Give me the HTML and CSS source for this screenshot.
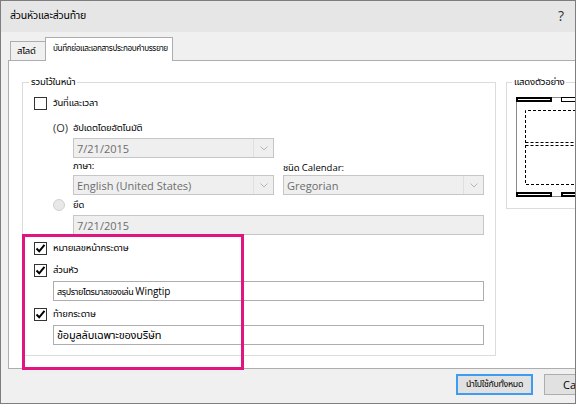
FILE: index.html
```html
<!DOCTYPE html>
<html lang="th">
<head>
<meta charset="utf-8">
<title>ส่วนหัวและส่วนท้าย</title>
<link rel="stylesheet" href="styles.css">
</head>
<body>
<div class="window">
  <div class="titlebar">
    <span class="title th">ส่วนหัวและส่วนท้าย</span>
    <span class="help">?</span>
  </div>
  <div class="tabs">
    <div class="tab th">สไลด์</div>
    <div class="tab active th">บันทึกย่อและเอกสารประกอบคำบรรยาย</div>
  </div>
  <div class="panel">
    <div class="group main">
      <div class="legend th">รวมไว้ในหน้า</div>
      <div class="cbrow first">
        <span class="cb"></span>
        <span class="lbl th">วันที่และเวลา</span>
      </div>
      <div class="radiorow r1">
        <span class="radio-on">(O)</span>
        <span class="lbl th">อัปเดตโดยอัตโนมัติ</span>
      </div>
      <div class="combo date">
        <span class="val">7/21/2015</span>
        <span class="arrow"><svg width="8" height="5" viewBox="0 0 8 5"><polyline points="0.5,0.5 4,4 7.5,0.5" fill="none" stroke="#b4b4b4" stroke-width="1"/></svg></span>
      </div>
      <div class="pair labels">
        <span class="lbl th">ภาษา:</span>
        <span class="lbl cal"><span class="th">ชนิด</span> Calendar:</span>
      </div>
      <div class="pair combos">
        <div class="combo">
          <span class="val">English (United States)</span>
          <span class="arrow"><svg width="8" height="5" viewBox="0 0 8 5"><polyline points="0.5,0.5 4,4 7.5,0.5" fill="none" stroke="#b4b4b4" stroke-width="1"/></svg></span>
        </div>
        <div class="combo">
          <span class="val">Gregorian</span>
          <span class="arrow"><svg width="8" height="5" viewBox="0 0 8 5"><polyline points="0.5,0.5 4,4 7.5,0.5" fill="none" stroke="#b4b4b4" stroke-width="1"/></svg></span>
        </div>
      </div>
      <div class="radiorow r2">
        <span class="radio-off"></span>
        <span class="lbl th">ยึด</span>
      </div>
      <div class="textbox fixed"><span class="val">7/21/2015</span></div>
      <div class="cbrow pg">
        <span class="cb"><svg width="11" height="11" viewBox="0 0 11 11"><polyline points="1.5,5.5 4.2,8.3 9.5,1.8" fill="none" stroke="#000" stroke-width="2"/></svg></span>
        <span class="lbl th">หมายเลขหน้ากระดาษ</span>
      </div>
      <div class="cbrow hd">
        <span class="cb"><svg width="11" height="11" viewBox="0 0 11 11"><polyline points="1.5,5.5 4.2,8.3 9.5,1.8" fill="none" stroke="#000" stroke-width="2"/></svg></span>
        <span class="lbl th">ส่วนหัว</span>
      </div>
      <div class="textbox white hdbox"><span class="txt tight th">สรุปรายไตรมาสของเล่น <span class="lat">Wingtip</span></span></div>
      <div class="cbrow ft">
        <span class="cb"><svg width="11" height="11" viewBox="0 0 11 11"><polyline points="1.5,5.5 4.2,8.3 9.5,1.8" fill="none" stroke="#000" stroke-width="2"/></svg></span>
        <span class="lbl th">ท้ายกระดาษ</span>
      </div>
      <div class="textbox white ftbox"><span class="txt big th">ข้อมูลลับเฉพาะของบริษัท</span></div>
      <div class="highlight"></div>
    </div>
    <div class="group preview">
      <div class="legend th">แสดงตัวอย่าง</div>
      <svg class="page" width="70" height="104" viewBox="0 0 70 104">
        <line x1="0.5" y1="1" x2="0.5" y2="101" stroke="#8a8a8a" stroke-width="1"/>
        <line x1="36" y1="1.5" x2="46" y2="1.5" stroke="#8a8a8a" stroke-width="1"/>
        <line x1="36" y1="100.5" x2="46" y2="100.5" stroke="#8a8a8a" stroke-width="1"/>
        <rect x="1" y="2" width="34" height="3" fill="#fff" stroke="#000" stroke-width="2"/>
        <rect x="45.5" y="1.5" width="40" height="4" fill="#fff" stroke="#000" stroke-width="1"/>
        <rect x="1" y="97" width="34" height="3" fill="#fff" stroke="#000" stroke-width="2"/>
        <rect x="46" y="97" width="40" height="3" fill="#fff" stroke="#000" stroke-width="2"/>
        <path d="M80 14.5 H9.5 V88.5 H80" fill="none" stroke="#000" stroke-width="1" stroke-dasharray="3,2"/>
        <line x1="9.5" y1="46.5" x2="80" y2="46.5" stroke="#000" stroke-width="1" stroke-dasharray="3,2"/>
        <line x1="9.5" y1="49.5" x2="80" y2="49.5" stroke="#000" stroke-width="1" stroke-dasharray="3,2"/>
      </svg>
    </div>
  </div>
  <div class="footer">
    <button class="btn primary th">นำไปใช้กับทั้งหมด</button>
    <button class="btn">Cancel</button>
  </div>
</div>
</body>
</html>
```
FILE: styles.css
```css
* { box-sizing: border-box; }

html, body {
  margin: 0;
  padding: 0;
  background: #ffffff;
}

body {
  font-family: "Open Sans", "Noto Sans", "Liberation Sans", sans-serif;
  font-size: 11px;
  color: #000;
}

.th {
  font-family: "Noto Sans Thai", "Tahoma", "Loma", "Garuda", "Noto Sans", "DejaVu Sans", sans-serif;
  font-size: 9.5px;
  letter-spacing: -0.2px;
}

.lat {
  font-family: "Open Sans", "Noto Sans", sans-serif;
  font-size: 10.5px;
  letter-spacing: 0;
}

.window {
  width: 576px;
  height: 404px;
  border: 1px solid #7e7e7e;
  background: #f0f0f0;
  overflow: hidden;
  display: flex;
  flex-direction: column;
}

.titlebar {
  height: 31px;
  flex: none;
  background: #e6e6e6;
  display: flex;
  align-items: center;
  justify-content: space-between;
  padding: 0 11px 2px 9px;
}

.title { font-size: 10.5px; }

.help {
  font-family: "Open Sans", sans-serif;
  font-size: 14px;
  color: #333;
}

.tabs {
  height: 28px;
  flex: none;
  display: flex;
  align-items: flex-end;
  padding-left: 9px;
  position: relative;
  z-index: 1;
}

.tab {
  height: 19px;
  border: 1px solid #adadad;
  border-bottom: none;
  background: #f0f0f0;
  display: flex;
  align-items: center;
  padding: 0 6px;
  width: 36px;
  white-space: nowrap;
}

.tab.active {
  height: 24px;
  width: auto;
  min-width: 125px;
  margin-left: -1px;
  margin-bottom: -1px;
  background: #fff;
  padding: 0 4px 2px 7px;
  font-size: 8.2px;
  letter-spacing: -0.4px;
}

.panel {
  height: 309px;
  flex: none;
  margin-left: 7px;
  margin-right: -20px;
  background: #fff;
  border: 1px solid #adadad;
  display: flex;
  align-items: flex-start;
  padding-top: 21px;
}

.group {
  border: 1px solid #dcdcdc;
  position: relative;
  flex: none;
}

.legend {
  height: 14px;
  line-height: 14px;
  margin-top: -8px;
  background: #fff;
  width: fit-content;
  padding: 0 2px;
  white-space: nowrap;
}

.group.main {
  margin-left: 13px;
  width: 474px;
  height: 274px;
}

.group.main > .legend { margin-left: 6px; }

.group.preview {
  margin-left: 10px;
  width: 110px;
  height: 127px;
}

.group.preview > .legend { margin-left: 5px; }

.page {
  display: block;
  margin: 7px 0 0 9px;
}

.cbrow {
  display: flex;
  align-items: center;
  height: 14px;
  margin-left: 11px;
  gap: 6px;
}

.cbrow.first { margin-top: 7px; }
.cbrow.pg { margin-top: 6px; }
.cbrow.hd { margin-top: 8px; }
.cbrow.ft { margin-top: 6px; }

.cb {
  width: 13px;
  height: 13px;
  border: 1px solid #333;
  background: #fff;
  display: flex;
  align-items: center;
  justify-content: center;
  flex: none;
}

.lbl { white-space: nowrap; }

.radiorow {
  display: flex;
  align-items: center;
  height: 14px;
  margin-left: 30px;
}

.radiorow.r1 { margin-top: 11px; }
.radiorow.r2 { margin-top: 3px; }

.radio-on {
  width: 20px;
  font-size: 11px;
  color: #333;
  line-height: 14px;
}

.radio-off {
  width: 12px;
  height: 12px;
  border-radius: 50%;
  border: 1px solid #cfcfcf;
  background: #e8e8e8;
  margin-right: 8px;
}

.combo {
  width: 201px;
  height: 20px;
  border: 1px solid #c6c6c6;
  background: #efefef;
  display: flex;
  align-items: center;
  justify-content: space-between;
  color: #6d6d6d;
  font-size: 11px;
}

.combo .val { padding-left: 3px; }

.combo .arrow {
  width: 20px;
  height: 18px;
  border-left: 1px solid #e0e0e0;
  display: flex;
  align-items: center;
  justify-content: center;
}

.combo.date {
  margin: 3px 0 0 50px;
}

.pair {
  display: flex;
  gap: 9px;
  margin-left: 50px;
}

.pair.labels {
  height: 14px;
  margin-top: 1px;
  align-items: center;
}

.pair.labels .lbl { width: 201px; }

.pair.labels .cal {
  font-size: 9.5px;
  padding-top: 3px;
}

.pair.combos { margin-top: 2px; }

.textbox {
  height: 20px;
  border: 1px solid #c6c6c6;
  background: #efefef;
  display: flex;
  align-items: center;
  color: #6d6d6d;
  font-size: 11px;
}

.textbox .val { padding-left: 3px; }

.textbox.fixed {
  width: 411px;
  margin: 3px 0 0 50px;
}

.textbox.white {
  background: #fff;
  border-color: #adadad;
  color: #000;
  width: 431px;
  margin: 4px 0 0 30px;
}

.textbox .txt { padding-left: 3px; white-space: nowrap; }

.textbox .txt.tight {
  font-size: 9px;
  letter-spacing: -0.4px;
}

.textbox .txt.tight .lat {
  font-size: 10px;
  letter-spacing: -0.1px;
}

.textbox .txt.big { font-size: 11px; }

.highlight {
  position: absolute;
  left: -1px;
  top: 151px;
  width: 222px;
  height: 136px;
  border: 3px solid #e0157f;
  pointer-events: none;
}

.footer {
  flex: 1;
  display: flex;
  align-items: flex-start;
  gap: 11px;
  padding: 5px 0 0 455px;
}

.btn {
  flex: none;
  height: 21px;
  width: 77px;
  background: #e1e1e1;
  border: 1px solid #adadad;
  padding: 0;
  font-family: "Open Sans", sans-serif;
  font-size: 11px;
  color: #000;
  text-align: left;
  padding-left: 18px;
  white-space: nowrap;
  overflow: hidden;
}

.btn.primary {
  border: 2px solid #3d9bf0;
  text-align: center;
  padding-left: 0;
  font-size: 8.8px;
  letter-spacing: -0.3px;
  font-family: "Noto Sans Thai", "Tahoma", "Noto Sans", sans-serif;
}
```
